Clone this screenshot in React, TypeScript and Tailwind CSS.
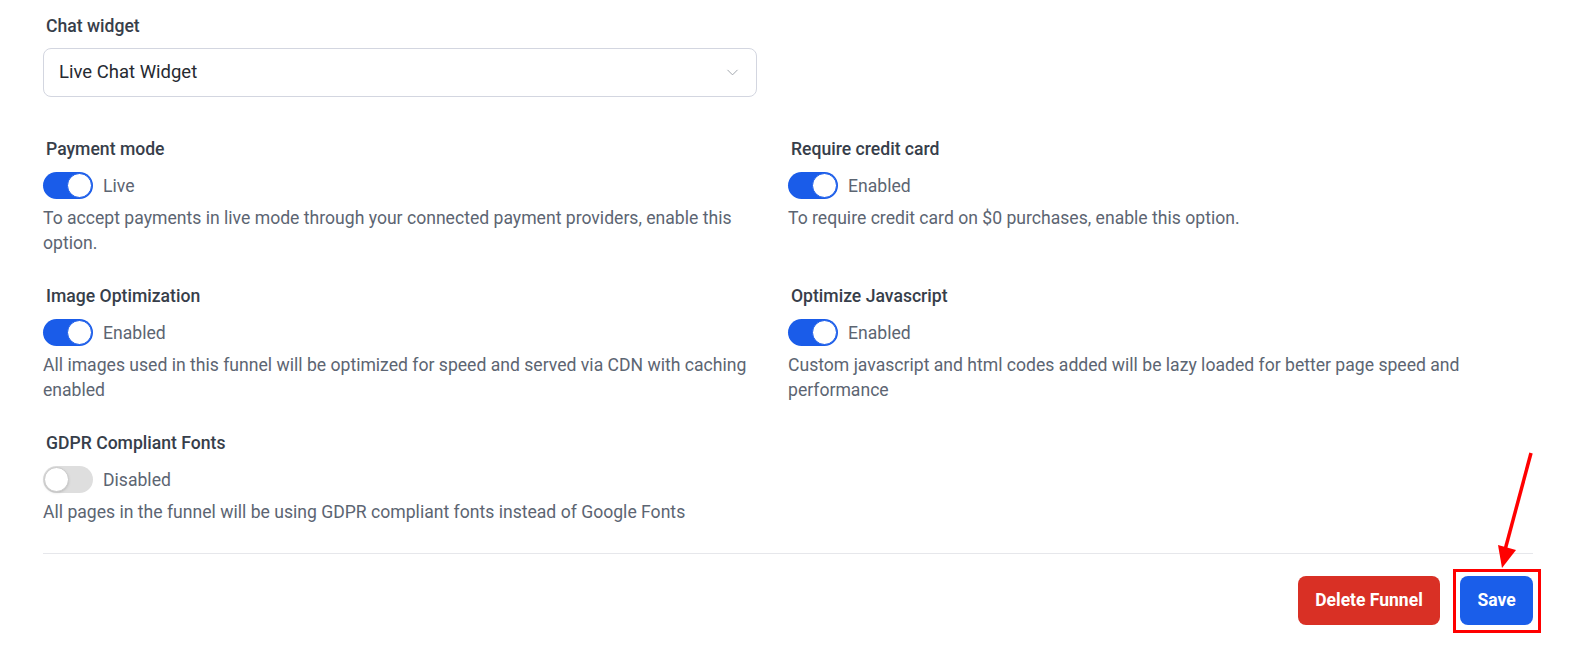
import { ChevronDown } from "lucide-react"

type Field = {
  label: string
  on: boolean
  state: string
  desc: string
}

const rows: Field[][] = [
  [
    {
      label: "Payment mode",
      on: true,
      state: "Live",
      desc: "To accept payments in live mode through your connected payment providers, enable this option.",
    },
    {
      label: "Require credit card",
      on: true,
      state: "Enabled",
      desc: "To require credit card on $0 purchases, enable this option.",
    },
  ],
  [
    {
      label: "Image Optimization",
      on: true,
      state: "Enabled",
      desc: "All images used in this funnel will be optimized for speed and served via CDN with caching enabled",
    },
    {
      label: "Optimize Javascript",
      on: true,
      state: "Enabled",
      desc: "Custom javascript and html codes added will be lazy loaded for better page speed and performance",
    },
  ],
  [
    {
      label: "GDPR Compliant Fonts",
      on: false,
      state: "Disabled",
      desc: "All pages in the funnel will be using GDPR compliant fonts instead of Google Fonts",
    },
  ],
]

function Toggle({ on }: { on: boolean }) {
  return (
    <span
      className={
        on
          ? "flex h-[27px] w-[50px] items-center justify-end rounded-full bg-[#1a5ce9] px-[1px]"
          : "flex h-[27px] w-[50px] items-center justify-start rounded-full bg-[#dedede] px-[1px]"
      }
    >
      <span
        className={
          on
            ? "h-[25px] w-[25px] rounded-full border border-[#1a5ce9] bg-white"
            : "h-[25px] w-[25px] rounded-full border border-[#c9c9c9] bg-white shadow-sm"
        }
      />
    </span>
  )
}

function SettingField({ f }: { f: Field }) {
  return (
    <div className="flex flex-col">
      <div className="pl-[3px] text-[17.6px] leading-[24px] font-medium text-[#373e4a]">{f.label}</div>
      <div className="mt-[11px] flex items-center gap-[10px]">
        <Toggle on={f.on} />
        <span className="text-[17.6px] leading-[24px] text-[#5c6572]">{f.state}</span>
      </div>
      <p className="mt-[7px] pr-[10px] text-[17.6px] leading-[25px] text-[#5c6572]">{f.desc}</p>
    </div>
  )
}

export default function App() {
  return (
    <div
      className="relative h-[647px] w-[1583px] overflow-hidden bg-white"
      style={{ fontFamily: "Roboto, 'Liberation Sans', sans-serif" }}
    >
      <div className="ml-[43px] w-[1490px] pt-[14px]">
        <div className="pl-[3px] text-[17.6px] leading-[24px] font-medium text-[#373e4a]">Chat widget</div>
        <div className="mt-[10px] flex h-[49px] w-[714px] items-center justify-between rounded-[8px] border border-[#d3d6e0] pr-[14px] pl-[15px]">
          <span className="text-[18.5px] text-[#262a31]">Live Chat Widget</span>
          <ChevronDown size={19} strokeWidth={1.2} className="text-[#9da2aa]" />
        </div>

        <div className="mt-[40px] flex flex-col gap-[28px]">
          {rows.map((row, i) => (
            <div key={i} className="grid grid-cols-2">
              {row.map((f) => (
                <SettingField key={f.label} f={f} />
              ))}
            </div>
          ))}
        </div>

        <div className="mt-[28px] h-px w-full bg-[#e6e7eb]" />

        <div className="mt-[22px] flex justify-end gap-[20px]">
          <button className="h-[49px] w-[142px] rounded-[8px] bg-[#d93025] text-[17.5px] font-bold text-white">
            Delete Funnel
          </button>
          <div className="relative">
            <button className="h-[49px] w-[73px] rounded-[8px] bg-[#1a5eea] text-[17.5px] font-bold text-white">
              Save
            </button>
            <div className="pointer-events-none absolute -top-[7px] -right-[8px] -bottom-[8px] -left-[7px] border-[3px] border-[#ff0000]" />
          </div>
        </div>
      </div>

      <svg className="absolute top-0 left-0" width="1583" height="647" viewBox="0 0 1583 647">
        <line x1="1531" y1="453" x2="1505" y2="550" stroke="#ff0000" strokeWidth="3.5" />
        <polygon points="1498,545 1516,550 1502,568" fill="#ff0000" />
      </svg>
    </div>
  )
}
